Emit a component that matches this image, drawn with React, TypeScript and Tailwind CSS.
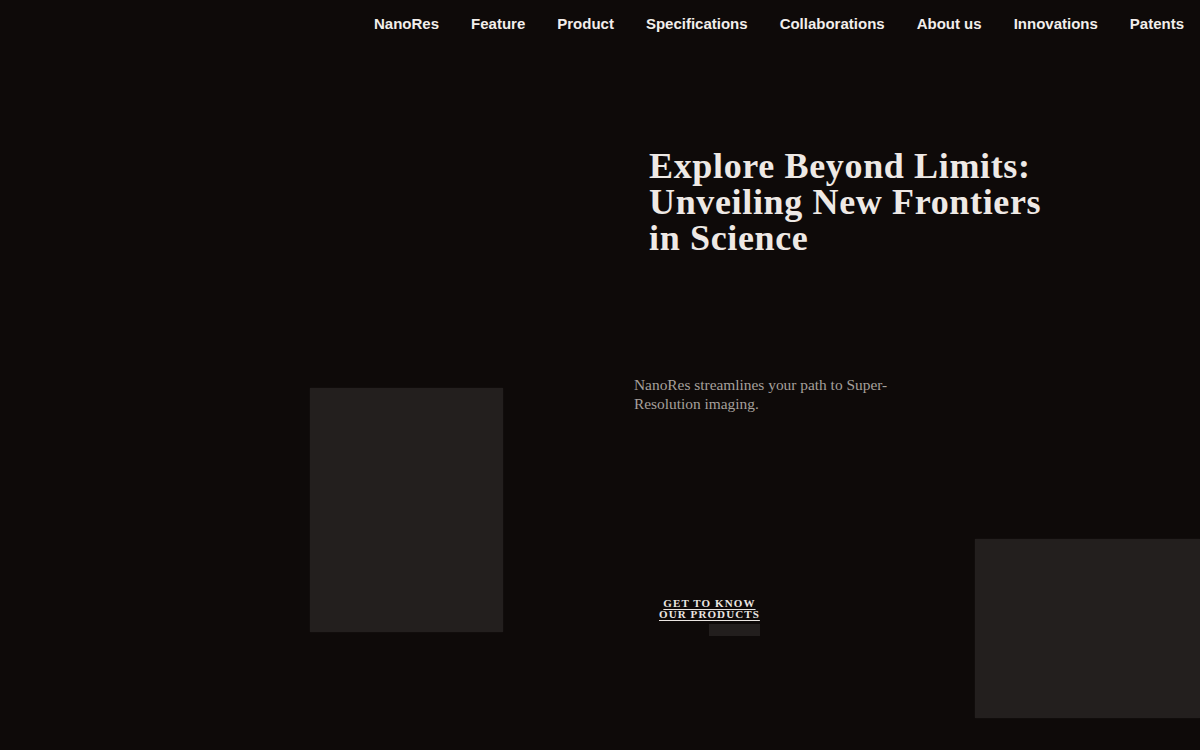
import React from 'react';

const navItems = ['NanoRes', 'Feature', 'Product', 'Specifications', 'Collaborations', 'About us', 'Innovations', 'Patents'];

const Header: React.FC = () => (
  <header className="h-12 flex items-center justify-end gap-8 pr-4">
    {navItems.map((item) => (
      <a key={item} href="#" className="text-[15px] font-bold text-[#f2eeeb] font-['Liberation_Sans',Arial,sans-serif]">
        {item}
      </a>
    ))}
  </header>
);

export default function App() {
  return (
    <div className="min-h-screen w-full bg-[#0e0a09] overflow-hidden font-['Liberation_Serif','Times_New_Roman',serif]">
      <Header />
      <main className="flex h-[702px]">
        {/* left column with the tall placeholder */}
        <div className="w-[634px] shrink-0 pl-[310px] pt-[340px]">
          <div className="w-[193px] h-[244px] bg-[#231f1e] shadow-[0_0_2px_rgba(255,255,255,0.06)]"></div>
        </div>

        {/* right column */}
        <div className="flex-1 flex flex-col">
          <h1 className="ml-[15px] mt-[100px] text-[36px] leading-[36px] font-bold tracking-[0.65px] text-[#eee9e5]">
            Explore Beyond Limits:
            <br />
            Unveiling New Frontiers
            <br />
            in Science
          </h1>

          <p className="mt-[119px] w-[285px] text-[15.4px] leading-[19px] text-[#a6a09c]">
            NanoRes streamlines your path to Super-Resolution imaging.
          </p>

          <div className="mt-[126px] flex items-start">
            <div className="ml-[25px] mt-[59px] flex flex-col items-end">
              <a href="#" className="text-center text-[11px] leading-[11px] font-bold tracking-[0.1em] uppercase underline underline-offset-2 text-[#ebe6e2]">
                Get to know
                <br />
                our products
              </a>
              <div className="mt-[4px] w-[51px] h-[12px] bg-[#221e1d]"></div>
            </div>
            <div className="ml-auto w-[225px] h-[179px] bg-[#231f1e] shadow-[0_0_2px_rgba(255,255,255,0.06)]"></div>
          </div>
        </div>
      </main>
    </div>
  );
}
